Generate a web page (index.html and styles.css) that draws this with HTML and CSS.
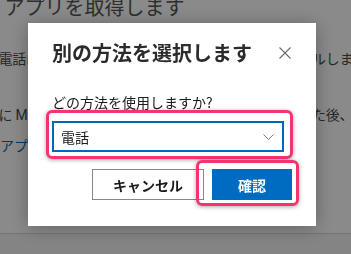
FILE: index.html
```html
<!DOCTYPE html>
<html lang="ja">
  <head>
    <meta charset="UTF-8" />
    <meta name="viewport" content="width=device-width, initial-scale=1.0" />
    <title>別の方法を選択します</title>
    <link rel="stylesheet" href="styles.css">
  </head>
  <body>
    <!-- Página de fondo -->
    <div class="page">
      <h1 class="page-title">Microsoft Authenticator アプリを取得します</h1>
      <p class="page-text first">最初に、電話に Microsoft Authenticator アプリをインストールします。</p>
      <p class="page-text second">デバイスに Microsoft Authenticator アプリをインストールした後、[次へ] を選択します。</p>
      <p class="page-link">別の認証アプリを使用します</p>
      <div class="page-footer"></div>
    </div>

    <!-- Diálogo -->
    <div class="overlay">
      <div class="dialog">
        <div class="dialog-header">
          <h2>別の方法を選択します</h2>
          <button class="close" aria-label="閉じる">
            <svg width="12" height="12" viewBox="0 0 12 12">
              <path d="M0.5 0.5 L11.5 11.5 M11.5 0.5 L0.5 11.5" stroke="#6b6b6b" stroke-width="1.1" fill="none" />
            </svg>
          </button>
        </div>

        <label class="field-label">どの方法を使用しますか?</label>
        <div class="select">
          <span>電話</span>
          <svg width="11" height="6" viewBox="0 0 11 6">
            <path d="M0.5 0.5 L5.5 5.5 L10.5 0.5" stroke="#7a7a7a" stroke-width="1" fill="none" />
          </svg>
        </div>

        <div class="actions">
          <button class="btn btn-cancel">キャンセル</button>
          <button class="btn btn-primary">確認</button>
        </div>

        <!-- Marcas de resaltado -->
        <div class="mark mark-select"></div>
        <div class="mark mark-confirm"></div>
      </div>
    </div>
  </body>
</html>
```

FILE: styles.css
```css
* {
  margin: 0;
  padding: 0;
  box-sizing: border-box;
}

body {
  font-family: Roboto, "Noto Sans CJK JP", sans-serif;
  background-color: #ffffff;
  color: #4a4a4a;
  width: 351px;
  height: 254px;
  overflow: hidden;
}

.page {
  margin-left: -56px;
  width: 600px;
}

.page-title {
  font-size: 20px;
  font-weight: normal;
  line-height: 26px;
  margin-top: -5px;
  text-indent: -156px;
  white-space: nowrap;
  color: #555;
}

.page-text,
.page-link {
  font-size: 14px;
  line-height: 20px;
  white-space: nowrap;
}

.page-text {
  letter-spacing: -0.25px;
}

.page-text.first {
  margin-top: 28px;
}

.page-text.second {
  margin-top: 36px;
}

.page-link {
  margin-top: 11px;
  color: #0067b8;
}

.page-footer {
  margin-top: 77px;
  height: 40px;
  border-top: 1px solid #d6d6d6;
  background-color: #f4f4f4;
}

.overlay {
  position: fixed;
  top: 0;
  left: 0;
  right: 0;
  bottom: 0;
  background-color: rgba(0, 0, 0, 0.46);
  padding: 23px 0 0 28px;
}

.dialog {
  position: relative;
  width: 288px;
  height: 203px;
  background-color: #ffffff;
  padding: 16px 24px 26px 24px;
  box-shadow: 0 2px 18px rgba(0, 0, 0, 0.3);
  font-family: "Noto Sans CJK JP", sans-serif;
  color: #1b1b1b;
}

.dialog-header {
  display: flex;
  justify-content: space-between;
  align-items: center;
  height: 28px;
}

.dialog-header h2 {
  font-size: 20px;
  font-weight: bold;
  line-height: 28px;
  color: #2b2b2b;
}

.close {
  width: 14px;
  height: 14px;
  display: flex;
  align-items: center;
  justify-content: center;
  background: none;
  border: none;
}

.field-label {
  display: block;
  margin-top: 25px;
  font-size: 14px;
  line-height: 20px;
}

.select {
  margin-top: 9px;
  width: 232px;
  height: 31px;
  border: 2px solid #0067b8;
  display: flex;
  align-items: center;
  justify-content: space-between;
  padding: 0 8px 0 7px;
  font-size: 14px;
}

.actions {
  margin-top: 17px;
  display: flex;
  justify-content: flex-end;
  gap: 8px;
}

.btn {
  height: 31px;
  font-family: "Noto Sans CJK JP", sans-serif;
  font-size: 14px;
  font-weight: bold;
  cursor: pointer;
}

.btn-cancel {
  width: 112px;
  background-color: #ffffff;
  border: 1px solid #8a8886;
  color: #1b1b1b;
}

.btn-primary {
  width: 80px;
  background-color: #006cc1;
  border: none;
  color: #ffffff;
}

.mark {
  position: absolute;
  border: 3px solid #f5336f;
  border-radius: 6px;
  box-shadow: 0 1px 4px rgba(0, 0, 0, 0.35);
}

.mark-select {
  left: 18px;
  top: 87px;
  width: 247px;
  height: 49px;
}

.mark-confirm {
  left: 168px;
  top: 137px;
  width: 103px;
  height: 46px;
}
```
